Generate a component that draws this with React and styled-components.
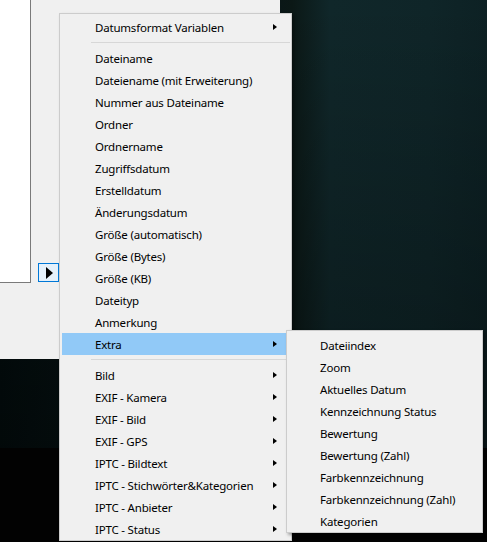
import styled, { createGlobalStyle } from "styled-components";

const GlobalStyle = createGlobalStyle`
    html, body {
        margin: 0;
        padding: 0;
        background: #020202;
    }
    body {
        font-family: "Noto Sans", "Open Sans", sans-serif;
        font-size: 11.5px;
        letter-spacing: -0.2px;
    }
`

const Screen = styled.div`
    position: relative;
    width: 487px;
    height: 542px;
    overflow: hidden;
    background:
        linear-gradient(to bottom, transparent 0, transparent 448px, #020202 448px),
        linear-gradient(to bottom, rgba(0, 0, 0, 0) 0, rgba(0, 0, 0, 0.35) 448px),
        linear-gradient(to right, #030d0e 0, #051112 60px, #0a1717 280px, #0b1816 292px, #10272a 330px, #0f2528 430px, #0d2124 100%);
`

const Dialog = styled.div`
    width: 280px;
    height: 359px;
    background: #f0f0f0;
    display: flex;
    align-items: flex-end;
`

const FieldRow = styled.div`
    display: flex;
    align-items: flex-end;
    gap: 7px;
    margin-bottom: 76px;
`

const Field = styled.div`
    width: 30px;
    height: 282px;
    background: #ffffff;
    border-right: 1px solid #7a7a7a;
    border-bottom: 1px solid #7a7a7a;
`

const ExpandButton = styled.div`
    width: 19px;
    height: 17px;
    margin-bottom: 1px;
    border: 1px solid #0078d7;
    background: #e5f1fb;
    display: flex;
    align-items: center;
    justify-content: center;

    &::after {
        content: "";
        width: 0;
        height: 0;
        border-left: 7px solid #000;
        border-top: 6.5px solid transparent;
        border-bottom: 6.5px solid transparent;
        margin-left: 1px;
    }
`

const Menu = styled.div`
    position: absolute;
    left: ${p => p.$left}px;
    top: ${p => p.$top}px;
    width: ${p => p.$width}px;
    box-sizing: border-box;
    background: #f0f0f0;
    border: 1px solid #cccccc;
    padding: ${p => p.$padTop}px 0 0 0;
    box-shadow: 2px 2px 3px rgba(0, 0, 0, 0.35);
    color: #000;
`

const Row = styled.div`
    height: 22px;
    margin: 0 2px;
    padding-left: ${p => p.$indent}px;
    display: flex;
    align-items: center;
    white-space: nowrap;
    background: ${p => (p.$active ? "#91c9f7" : "transparent")};
`

const Label = styled.span`
    flex: 1;
    line-height: 22px;
    padding-top: 2px;
`

const Arrow = styled.span`
    width: 0;
    height: 0;
    margin-right: 12px;
    border-left: 4px solid #000;
    border-top: 3.5px solid transparent;
    border-bottom: 3.5px solid transparent;
`

const Separator = styled.div`
    height: 9px;
    display: flex;
    align-items: center;
    margin: 0 1px 0 31px;

    &::before {
        content: "";
        flex: 1;
        height: 1px;
        background: #d7d7d7;
    }
`

const mainItems = [
    { label: "Datumsformat Variablen", sub: true },
    { sep: true },
    { label: "Dateiname" },
    { label: "Dateiename (mit Erweiterung)" },
    { label: "Nummer aus Dateiname" },
    { label: "Ordner" },
    { label: "Ordnername" },
    { label: "Zugriffsdatum" },
    { label: "Erstelldatum" },
    { label: "Änderungsdatum" },
    { label: "Größe (automatisch)" },
    { label: "Größe (Bytes)" },
    { label: "Größe (KB)" },
    { label: "Dateityp" },
    { label: "Anmerkung" },
    { label: "Extra", sub: true, active: true },
    { sep: true },
    { label: "Bild", sub: true },
    { label: "EXIF - Kamera", sub: true },
    { label: "EXIF - Bild", sub: true },
    { label: "EXIF - GPS", sub: true },
    { label: "IPTC - Bildtext", sub: true },
    { label: "IPTC - Stichwörter&Kategorien", sub: true },
    { label: "IPTC - Anbieter", sub: true },
    { label: "IPTC - Status", sub: true },
]

const extraItems = [
    "Dateiindex",
    "Zoom",
    "Aktuelles Datum",
    "Kennzeichnung Status",
    "Bewertung",
    "Bewertung (Zahl)",
    "Farbkennzeichnung",
    "Farbkennzeichnung (Zahl)",
    "Kategorien",
]

function App() {
    return (
        <>
            <GlobalStyle />
            <Screen>
                <Dialog>
                    <FieldRow>
                        <Field />
                        <ExpandButton />
                    </FieldRow>
                </Dialog>

                <Menu $left={59} $top={13} $width={233} $padTop={2}>
                    {mainItems.map((item, i) =>
                        item.sep ? (
                            <Separator key={i} />
                        ) : (
                            <Row key={i} $indent={33} $active={item.active}>
                                <Label>{item.label}</Label>
                                {item.sub && <Arrow />}
                            </Row>
                        )
                    )}
                </Menu>

                <Menu $left={286} $top={330} $width={197} $padTop={3}>
                    {extraItems.map((label, i) => (
                        <Row key={i} $indent={31}>
                            <Label>{label}</Label>
                        </Row>
                    ))}
                </Menu>
            </Screen>
        </>
    )
}

export default App
